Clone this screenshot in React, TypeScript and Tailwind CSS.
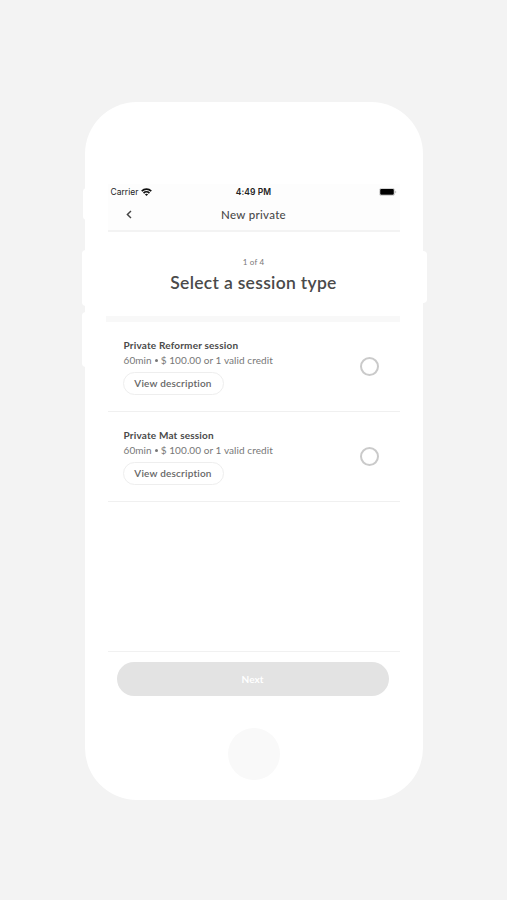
const sessions = [
  { title: "Private Reformer session", duration: "60min", price: "$ 100.00 or 1 valid credit" },
  { title: "Private Mat session", duration: "60min", price: "$ 100.00 or 1 valid credit" },
];

const WifiIcon = () => (
  <svg viewBox="0 0 22 16" className="h-2 w-[11px]" fill="none" stroke="#111" strokeWidth="3.4">
    <path d="M1.5 6.2C6.8 .9 15.2 .9 20.5 6.2" />
    <path d="M5.1 10.2c3.3-3.2 8.5-3.2 11.8 0" />
    <path d="M11 16l-3.2-3.4c1.8-1.7 4.6-1.7 6.4 0z" fill="#111" stroke="none" />
  </svg>
);

const BatteryIcon = () => (
  <svg viewBox="0 0 18 8" className="h-2 w-[18px]">
    <rect x=".4" y=".4" width="15.2" height="7.2" rx="2" fill="#fff" stroke="#bbb" strokeWidth=".7" />
    <rect x="1.2" y="1" width="13.6" height="5.8" rx="1" fill="#000" />
    <path d="M16.5 2.8c.9.3.9 2.1 0 2.4z" fill="#999" />
  </svg>
);

const StatusBar = () => (
  <div className="grid h-4 grid-cols-3 items-center px-[3px] font-['Inter',sans-serif] text-[#222]">
    <div className="flex items-center gap-[3px] text-[8.5px]">
      <span>Carrier</span>
      <WifiIcon />
    </div>
    <span className="text-center text-[8.5px] font-semibold tracking-[0.1px]">4:49 PM</span>
    <div className="flex justify-end">
      <BatteryIcon />
    </div>
  </div>
);

const NavBar = () => (
  <div className="grid h-8 grid-cols-[42px_1fr_42px] items-center border-b-2 border-[#f3f3f3]">
    <button aria-label="Back" className="flex justify-center pb-0.5">
      <svg viewBox="0 0 6 10" className="h-[9px] w-1.5" fill="none" stroke="#444" strokeWidth="1.6">
        <path d="M5.2 1L1.2 5l4 4" />
      </svg>
    </button>
    <h1 className="text-center text-[11.5px] font-medium leading-4 tracking-[0.3px]">New private</h1>
  </div>
);

type SessionRowProps = { title: string; duration: string; price: string };

const SessionRow = ({ title, duration, price }: SessionRowProps) => (
  <li className="flex h-[90px] items-center justify-between border-b border-[#f0f0f0] pl-[15px] pr-[21px]">
    <div>
      <h3 className="pl-px text-[10px] font-bold leading-[15px] tracking-[0.18px]">{title}</h3>
      <p className="flex items-center gap-[3px] pl-px text-[10px] leading-[15px] tracking-[0.08px] text-[#777]">
        <span>{duration}</span>
        <span className="h-[3px] w-[3px] rounded-full bg-[#777]" />
        <span>{price}</span>
      </p>
      <button className="mt-1 flex h-[23px] w-[101px] items-center justify-center rounded-full border border-[#eeeeee] text-[10px] font-semibold tracking-[0.2px] text-[#666]">
        View description
      </button>
    </div>
    <span className="h-[19px] w-[19px] rounded-full border-2 border-[#cacaca]" />
  </li>
);

const App = () => {
  return (
    <main className="flex h-[900px] w-[507px] justify-center bg-[#f3f3f3] pt-[102px] font-['Lato',sans-serif] text-[#4a4a4a]">
      <div className="relative flex h-[698px] w-[338px] flex-col rounded-[52px] bg-white px-[23px] pt-[82px]">
        {/* side buttons */}
        <span className="absolute -left-0.5 top-[86px] h-[32px] w-2 rounded-l bg-white" />
        <span className="absolute -left-[3px] top-[148px] h-[56px] w-2 rounded-l bg-white" />
        <span className="absolute -left-[3px] top-[210px] h-[55px] w-2 rounded-l bg-white" />
        <span className="absolute -right-1 top-[149px] h-[52px] w-2 rounded-r bg-white" />

        <div className="flex h-[520px] flex-col">
          <div className="bg-[#fdfdfd]">
            <StatusBar />
            <NavBar />
          </div>

          <div className="h-[84px] pt-[25px] text-center">
            <p className="text-[8px] leading-[10px] tracking-[0.2px] text-[#777]">1 of 4</p>
            <h2 className="mt-[5px] text-[17.5px] font-semibold leading-[22px] tracking-[0.3px]">Select a session type</h2>
          </div>
          <div className="-ml-0.5 h-1.5 bg-[#f8f8f8]" />

          <ul>
            {sessions.map((session) => (
              <SessionRow key={session.title} {...session} />
            ))}
          </ul>

          <div className="mt-auto border-t border-[#f1f1f1] pb-2 pl-[9px] pr-[11px] pt-2.5">
            <button className="flex h-[34px] w-full items-center justify-center rounded-full bg-[#e3e3e3] text-[10px] font-bold text-white">
              Next
            </button>
          </div>
        </div>

        <div className="mx-auto mt-6 h-[52px] w-[52px] rounded-full bg-[#f9f9f9]" />
      </div>
    </main>
  );
};

export default App;
